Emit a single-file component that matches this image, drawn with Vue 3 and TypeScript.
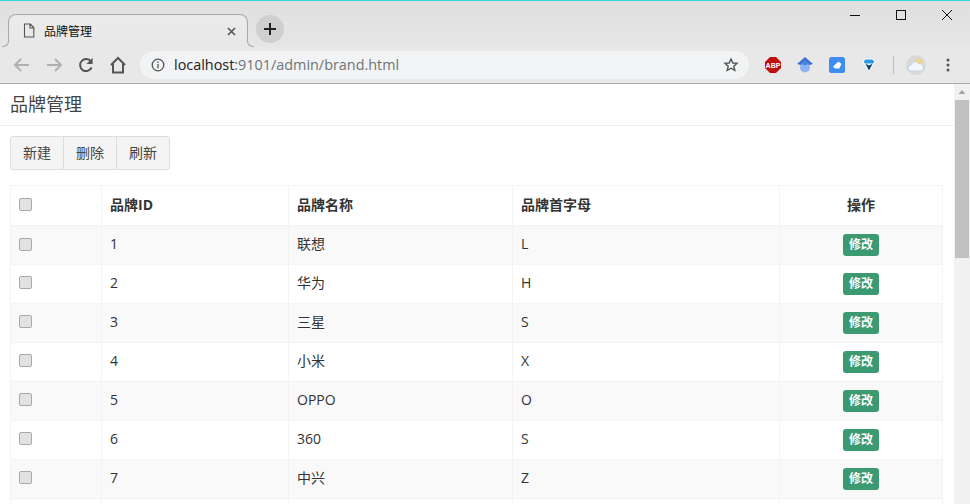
<script setup lang="ts">
interface Brand { id: number; name: string; letter: string }
const brands: Brand[] = [
  { id: 1, name: '联想', letter: 'L' },
  { id: 2, name: '华为', letter: 'H' },
  { id: 3, name: '三星', letter: 'S' },
  { id: 4, name: '小米', letter: 'X' },
  { id: 5, name: 'OPPO', letter: 'O' },
  { id: 6, name: '360', letter: 'S' },
  { id: 7, name: '中兴', letter: 'Z' },
]
const actions = ['新建', '删除', '刷新']
const columns = [1, 2, 3, 4, 5]
</script>

<template>
  <div class="window">
    <div class="strip">
      <div class="tab">
        <svg class="fileicon" width="12" height="15" viewBox="0 0 12 15" fill="none" stroke="#555" stroke-width="1.1"><path d="M1.5 1h5.800L10.800 4.500V14H1.500zM7 1v4h3.800"/></svg>
        <span class="tabtitle">品牌管理</span>
        <svg class="tabclose" width="9" height="9" viewBox="0 0 9 9" stroke="#555" stroke-width="1.6"><path d="M1 1l7 7M8 1L1 8"/></svg>
      </div>
      <div class="newtab">
        <svg width="14" height="14" viewBox="0 0 14 14" stroke="#222" stroke-width="2"><path d="M7 1v12M1 7h12"/></svg>
      </div>
      <div class="winctl">
        <svg width="46" height="30" viewBox="0 0 46 30" stroke="#111" fill="none"><path d="M18 14.500h10"/></svg>
        <svg width="46" height="30" viewBox="0 0 46 30" stroke="#111" fill="none"><rect x="18.500" y="9.500" width="9" height="9"/></svg>
        <svg width="46" height="30" viewBox="0 0 46 30" stroke="#111" fill="none"><path d="M18 9l10 10M28 9L18 19"/></svg>
      </div>
    </div>
    <div class="toolbar">
      <svg class="navbtn" width="32" height="18" viewBox="0 0 32 18" fill="none" stroke="#b0b0b0" stroke-width="2"><path d="M23 9H9M15 3L9 9l6 6"/></svg>
      <svg class="navbtn" width="32" height="18" viewBox="0 0 32 18" fill="none" stroke="#b0b0b0" stroke-width="2"><path d="M9 9h14M17 3l6 6-6 6"/></svg>
      <svg class="navbtn" width="32" height="18" viewBox="0 0 32 18" fill="none" stroke="#555" stroke-width="2"><path d="M21.600 11.500A6 6 0 1 1 21 5.600"/><path d="M22.600 1.800v6.200h-6.200z" fill="#555" stroke="none"/></svg>
      <svg class="navbtn" width="32" height="18" viewBox="0 0 32 18" fill="none" stroke="#555" stroke-width="2"><path d="M9 9l7-7 7 7M11 8v8.500h10V8"/></svg>
      <div class="omnibox">
        <svg width="14" height="14" viewBox="0 0 14 14" fill="none" stroke="#555" stroke-width="1.3"><circle cx="7" cy="7" r="5.800"/><path d="M7 6v4.200M7 3.600v1.400"/></svg>
        <span class="url">localhost<span class="urlrest">:9101/admin/brand.html</span></span>
        <svg class="star" width="16" height="16" viewBox="0 0 16 16" fill="none" stroke="#555" stroke-width="1.4"><path d="M8 2l1.800 4 4.200.4-3.200 2.800 1 4.200L8 11.200l-3.800 2.200 1-4.200L2 6.400 6.200 6z"/></svg>
      </div>
      <div class="exts">
        <svg width="16" height="16" viewBox="0 0 16 16"><path d="M5 0h6l5 5v6l-5 5H5l-5-5V5z" fill="#c00d0d"/><text x="8" y="10.600" text-anchor="middle" class="abp">ABP</text></svg>
        <svg width="16" height="16" viewBox="0 0 16 16"><circle cx="8" cy="10.500" r="5" fill="#8db4f2"/><path d="M8 0l8 7-3.500 1L8 5.500 3.500 8 0 7z" fill="#3a72d0"/><path d="M3.500 6.500L8 3l4.500 3.500L8 8.500z" fill="#4a84dc"/></svg>
        <svg width="16" height="16" viewBox="0 0 16 16"><rect width="16" height="16" rx="2.500" fill="#3d8cf0"/><path d="M4 9.500l5.500-5 3 2.500-2.200 4.500H6z" fill="#fff"/></svg>
        <svg width="16" height="16" viewBox="0 0 16 16"><path d="M0.500 4.500L3.500 1h9l3 3.500L8 15.800z" fill="#fff" stroke="#ddd" stroke-width=".8"/><path d="M2.500 4.500L4.500 2.500h7l2 2-1.500 2H4z" fill="#2a9ae0"/><path d="M4.200 6.500L8 13.500l3.800-7L8 8.500z" fill="#0d3f70"/></svg>
        <span class="sep"></span>
        <span class="weather">
          <svg width="18" height="14" viewBox="0 0 18 14"><circle cx="12" cy="4.500" r="3.500" fill="#f4d67c"/><path d="M4 13a3 3 0 0 1 0-6 4.300 4.300 0 0 1 8-1 3.500 3.500 0 0 1 1.500 7z" fill="#f3f7fb" stroke="#b7cfe6" stroke-width=".8"/></svg>
        </span>
        <svg width="4" height="14" viewBox="0 0 4 14" fill="#555"><circle cx="2" cy="2" r="1.500"/><circle cx="2" cy="7" r="1.500"/><circle cx="2" cy="12" r="1.500"/></svg>
      </div>
    </div>
    <div class="viewport">
      <main class="page">
        <h1 class="heading">品牌管理</h1>
        <div class="content">
          <div class="btngroup">
            <button v-for="a in actions" :key="a" type="button">{{ a }}</button>
          </div>
          <table class="grid">
            <colgroup>
              <col class="c1" /><col class="c2" /><col class="c3" /><col class="c4" /><col class="c5" />
            </colgroup>
            <thead>
              <tr>
                <th class="chk"><input type="checkbox" /></th>
                <th>品牌ID</th>
                <th>品牌名称</th>
                <th>品牌首字母</th>
                <th class="center">操作</th>
              </tr>
            </thead>
            <tbody>
              <tr v-for="b in brands" :key="b.id">
                <td class="chk"><input type="checkbox" /></td>
                <td>{{ b.id }}</td>
                <td>{{ b.name }}</td>
                <td>{{ b.letter }}</td>
                <td class="center"><span class="edit">修改</span></td>
              </tr>
              <tr>
                <td v-for="c in columns" :key="c"></td>
              </tr>
            </tbody>
          </table>
        </div>
      </main>
      <div class="scrollbar">
        <svg class="arrow" width="16" height="16" viewBox="0 0 16 16"><path d="M8 6l-3.500 4h7z" fill="#a3a3a3"/></svg>
        <div class="thumb"></div>
      </div>
    </div>
  </div>
</template>

<style>
html, body { margin: 0; overflow: hidden; }
</style>

<style scoped>
.window {
  width: 970px;
  height: 504px;
  overflow: hidden;
  display: flex;
  flex-direction: column;
  font-family: "Open Sans", "Noto Sans CJK SC", sans-serif;
  color: #333;
  background: #fff;
}
.strip {
  height: 45px;
  box-sizing: content-box;
  border-top: 1px solid #2fd6d6;
  border-bottom: 1px solid #a9a9a9;
  background: linear-gradient(#dfdfdf, #e6e6e6);
  display: flex;
  align-items: flex-end;
  padding-left: 8px;
  flex: none;
  margin-bottom: -1px;
}
.tab {
  position: relative;
  box-sizing: border-box;
  width: 240px;
  height: 33px;
  margin-bottom: -1px;
  border: 1px solid #a9a9a9;
  border-bottom: none;
  border-radius: 8px 8px 0 0;
  background: linear-gradient(#ebebeb, #e8e8e8);
  display: flex;
  align-items: center;
  padding: 0 11px 0 14px;
  color: #111;
  font-size: 12px;
}
.tab::before,
.tab::after {
  content: "";
  position: absolute;
  bottom: 0;
  width: 6px;
  height: 6px;
  background: #e6e6e6;
  border-bottom: 1px solid #a9a9a9;
}
.tab::before {
  left: -7px;
  border-right: 1px solid #a9a9a9;
  border-bottom-right-radius: 6px;
  box-shadow: 3px 3px 0 #e8e8e8;
}
.tab::after {
  right: -7px;
  border-left: 1px solid #a9a9a9;
  border-bottom-left-radius: 6px;
  box-shadow: -3px 3px 0 #e8e8e8;
}
.fileicon { flex: none; margin-right: 9px; margin-top: -2px; }
.tabtitle { flex: 1; font-family: "Noto Sans CJK SC", sans-serif; margin-top: -1px; }
.tabclose { flex: none; }
.newtab {
  width: 28px;
  height: 28px;
  margin: 0 0 3px 8px;
  border-radius: 50%;
  background: #cfcfcf;
  display: flex;
  align-items: center;
  justify-content: center;
}
.winctl {
  margin-left: auto;
  align-self: flex-start;
  display: flex;
}
.winctl svg { display: block; }
.toolbar {
  box-sizing: border-box;
  height: 38px;
  flex: none;
  background: #e8e8e8;
  border-bottom: 1px solid #a9a9a9;
  display: flex;
  align-items: center;
  padding-left: 6px;
}
.navbtn { flex: none; display: block; }
.omnibox {
  box-sizing: border-box;
  width: 609px;
  height: 28px;
  margin-left: 6px;
  border-radius: 14px;
  background: #f1f3f4;
  display: flex;
  align-items: center;
  padding: 0 10px 0 11px;
}
.url {
  flex: 1;
  margin-left: 9px;
  font-size: 14.400px;
  color: #222;
  white-space: nowrap;
}
.urlrest { color: #6f7478; }
.exts {
  display: flex;
  align-items: center;
  margin-left: 16px;
  gap: 16px;
}
.abp { font: bold 7px "Liberation Sans", sans-serif; fill: #fff; }
.sep { width: 1px; height: 18px; background: #bdbdbd; }
.weather {
  width: 20px;
  height: 20px;
  border-radius: 50%;
  background: #d9d9d9;
  display: flex;
  align-items: center;
  justify-content: center;
  margin-left: -4px;
  margin-right: 4px;
}
.viewport { flex: 1; min-height: 0; display: flex; overflow: hidden; }
.page { width: 954px; flex: none; }
.heading {
  box-sizing: border-box;
  height: 42px;
  margin: 0;
  padding: 7px 10px 0;
  border-bottom: 1px solid #f0f0f0;
  font-size: 18px;
  line-height: 24px;
  font-weight: 400;
  color: #444;
  font-family: "Noto Sans CJK SC", sans-serif;
}
.content { padding: 10px; }
.btngroup { display: flex; margin-bottom: 15px; }
.btngroup button {
  box-sizing: border-box;
  width: 54px;
  height: 34px;
  margin-left: -1px;
  border: 1px solid #ddd;
  background: #f4f4f4;
  color: #444;
  font: 14px/30px "Noto Sans CJK SC", sans-serif;
  padding: 0 0 2px;
}
.btngroup button:first-child { margin-left: 0; border-radius: 3px 0 0 3px; }
.btngroup button:last-child { border-radius: 0 3px 3px 0; }
.grid {
  table-layout: fixed;
  width: 932px;
  border-collapse: collapse;
  font-size: 14px;
  line-height: 20px;
}
.c1 { width: 91px; }
.c2 { width: 187px; }
.c3 { width: 224px; }
.c4 { width: 267px; }
.c5 { width: 163px; }
th, td {
  border: 1px solid #f4f4f4;
  padding: 0 8px;
  height: 39px;
  box-sizing: border-box;
  text-align: left;
  vertical-align: middle;
}
th { height: 40px; border-bottom-width: 2px; font-weight: 700; }
td { color: #333; padding-bottom: 2px; }
tbody tr:nth-child(odd) { background: #f9f9f9; }
.center { text-align: center; }
td.center { padding-bottom: 0; }
.chk { vertical-align: top; padding-top: 11px; padding-bottom: 0; }
th.chk { padding-top: 12px; }
.chk input {
  appearance: none;
  display: block;
  margin: 0;
  width: 13px;
  height: 13px;
  border: 1px solid #a9a9a9;
  border-radius: 2px;
  background: #e2e2e2;
  box-sizing: border-box;
}
.edit {
  display: block;
  width: 36px;
  height: 22px;
  margin: 0 auto;
  line-height: 22px;
  border-radius: 3px;
  background: #3c9a72;
  color: #fff;
  font-size: 12px;
  font-weight: 700;
  text-align: center;
}
.scrollbar {
  width: 16px;
  flex: none;
  background: #f1f1f1;
}
.arrow { display: block; }
.thumb { width: 14px; height: 158px; margin-left: 1px; background: #c1c1c1; }
</style>
